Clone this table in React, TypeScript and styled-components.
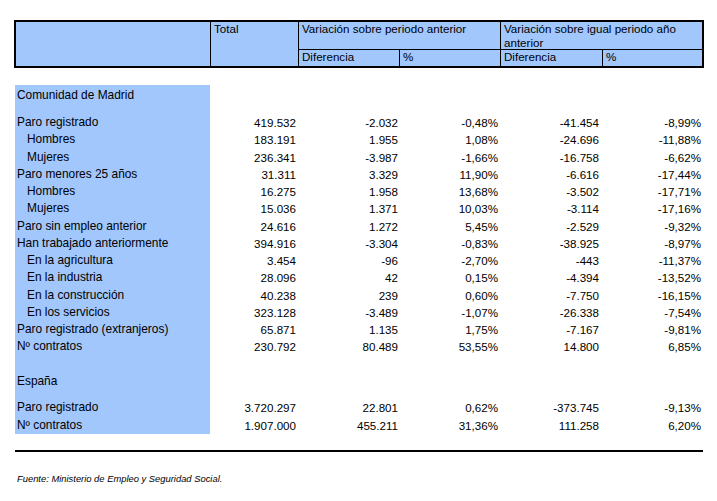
import React from "react";
import styled, { createGlobalStyle } from "styled-components";

const Global = createGlobalStyle`
  html, body { margin: 0; padding: 0; background: #fff; }
  body { font-family: "Liberation Sans", Arial, sans-serif; color: #000; }
`;

const BLUE = "#a2c7fd";
const COLS = "195px 88px 101px 101px 102px 102px";

const Page = styled.div`
  padding: 20px 0 0 14px;
  width: 717px;
  box-sizing: border-box;
`;

const HeaderGrid = styled.div`
  display: grid;
  grid-template-columns: 194px 87px 100px 100px 101px 99px;
  grid-template-rows: 27px 16px;
  gap: 1px;
  width: 690px;
  box-sizing: border-box;
  border: 2px solid #000;
  background: #000;
  font-size: 11.6px;
  line-height: 14px;
`;

const HCell = styled.div<{ $col: string; $row: string }>`
  grid-column: ${(p) => p.$col};
  grid-row: ${(p) => p.$row};
  background: ${BLUE};
  padding: 0 3px;
  overflow: visible;
  white-space: normal;
`;

const Body = styled.div`
  margin: 17px 0 0 1px;
  font-size: 11.6px;
`;

const Row = styled.div<{ $h: number }>`
  display: grid;
  grid-template-columns: ${COLS};
  height: ${(p) => p.$h}px;
  line-height: ${(p) => p.$h}px;
`;

const Label = styled.div<{ $indent: number }>`
  background: ${BLUE};
  padding-left: ${(p) => p.$indent}px;
  white-space: nowrap;
  font-size: 11.9px;
`;

const Num = styled.div<{ $pr: number }>`
  text-align: right;
  padding-right: ${(p) => p.$pr}px;
  white-space: nowrap;
`;

const Rule = styled.div`
  margin: 16px 0 0 1px;
  width: 688px;
  height: 2px;
  background: #000;
`;

const Footer = styled.div`
  margin: 21px 0 0 3px;
  font-size: 9.4px;
  line-height: 11px;
  font-style: italic;
`;

type D = { label: string; indent?: boolean; v: string[] };

const madrid: D[] = [
  { label: "Paro registrado", v: ["419.532", "-2.032", "-0,48%", "-41.454", "-8,99%"] },
  { label: "Hombres", indent: true, v: ["183.191", "1.955", "1,08%", "-24.696", "-11,88%"] },
  { label: "Mujeres", indent: true, v: ["236.341", "-3.987", "-1,66%", "-16.758", "-6,62%"] },
  { label: "Paro menores 25 años", v: ["31.311", "3.329", "11,90%", "-6.616", "-17,44%"] },
  { label: "Hombres", indent: true, v: ["16.275", "1.958", "13,68%", "-3.502", "-17,71%"] },
  { label: "Mujeres", indent: true, v: ["15.036", "1.371", "10,03%", "-3.114", "-17,16%"] },
  { label: "Paro sin empleo anterior", v: ["24.616", "1.272", "5,45%", "-2.529", "-9,32%"] },
  { label: "Han trabajado anteriormente", v: ["394.916", "-3.304", "-0,83%", "-38.925", "-8,97%"] },
  { label: "En la agricultura", indent: true, v: ["3.454", "-96", "-2,70%", "-443", "-11,37%"] },
  { label: "En la industria", indent: true, v: ["28.096", "42", "0,15%", "-4.394", "-13,52%"] },
  { label: "En la construcción", indent: true, v: ["40.238", "239", "0,60%", "-7.750", "-16,15%"] },
  { label: "En los servicios", indent: true, v: ["323.128", "-3.489", "-1,07%", "-26.338", "-7,54%"] },
  { label: "Paro registrado (extranjeros)", v: ["65.871", "1.135", "1,75%", "-7.167", "-9,81%"] },
  { label: "Nº contratos", v: ["230.792", "80.489", "53,55%", "14.800", "6,85%"] },
];

const espana: D[] = [
  { label: "Paro registrado", v: ["3.720.297", "22.801", "0,62%", "-373.745", "-9,13%"] },
  { label: "Nº contratos", v: ["1.907.000", "455.211", "31,36%", "111.258", "6,20%"] },
];

const PR = [2, 1, 2, 3, 3];
const RH = 17.25;

const DataRow: React.FC<{ d: D }> = ({ d }) => (
  <Row $h={RH}>
    <Label $indent={d.indent ? 12 : 2}>{d.label}</Label>
    {d.v.map((x, i) => (
      <Num key={i} $pr={PR[i]}>
        {x}
      </Num>
    ))}
  </Row>
);

const Blank: React.FC<{ h: number; label?: string }> = ({ h, label }) => (
  <Row $h={h}>
    <Label $indent={2}>{label ?? ""}</Label>
  </Row>
);

export default function App() {
  return (
    <>
      <Global />
      <Page>
        <HeaderGrid>
          <HCell $col="1" $row="1 / 3" />
          <HCell $col="2" $row="1 / 3">Total</HCell>
          <HCell $col="3 / 5" $row="1">Variación sobre periodo anterior</HCell>
          <HCell $col="5 / 7" $row="1">Variación sobre igual periodo año anterior</HCell>
          <HCell $col="3" $row="2">Diferencia</HCell>
          <HCell $col="4" $row="2">%</HCell>
          <HCell $col="5" $row="2">Diferencia</HCell>
          <HCell $col="6" $row="2">%</HCell>
        </HeaderGrid>
        <Body>
          <Blank h={20} label="Comunidad de Madrid" />
          <Blank h={9} />
          {madrid.map((d, i) => (
            <DataRow key={i} d={d} />
          ))}
          <Blank h={17.25} />
          <Blank h={17.25} label="España" />
          <Blank h={9.4} />
          {espana.map((d, i) => (
            <DataRow key={i} d={d} />
          ))}
        </Body>
        <Rule />
        <Footer>Fuente: Ministerio de Empleo y Seguridad Social.</Footer>
      </Page>
    </>
  );
}
